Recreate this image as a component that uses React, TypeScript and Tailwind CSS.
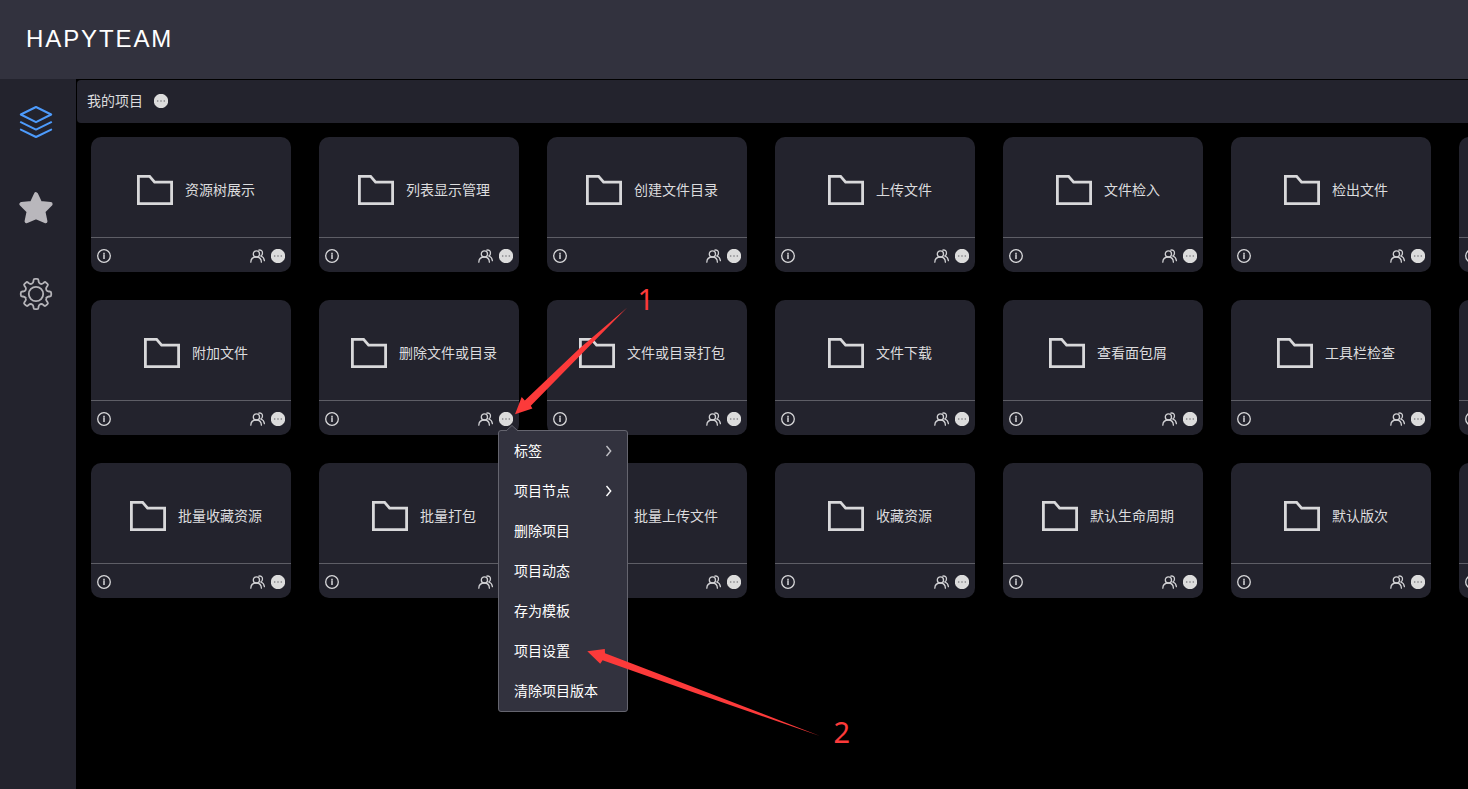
import React from "react";

const rows: string[][] = [
  ["资源树展示", "列表显示管理", "创建文件目录", "上传文件", "文件检入", "检出文件", ""],
  ["附加文件", "删除文件或目录", "文件或目录打包", "文件下载", "查看面包屑", "工具栏检查", ""],
  ["批量收藏资源", "批量打包", "批量上传文件", "收藏资源", "默认生命周期", "默认版次", ""],
];

const menuItems = [
  { label: "标签", sub: true, dim: true },
  { label: "项目节点", sub: true },
  { label: "删除项目" },
  { label: "项目动态" },
  { label: "存为模板" },
  { label: "项目设置" },
  { label: "清除项目版本" },
];

function gearPath() {
  const points: { x: number; y: number; r: number }[] = [];
  const add = (deg: number, radius: number, r: number) => {
    const a = (deg * Math.PI) / 180;
    points.push({ x: 17 + radius * Math.sin(a), y: 17 + radius * Math.cos(a), r });
  };
  for (let i = 0; i < 8; i++) {
    const c = i * 45;
    add(c - 13.5, 11.2, 2);
    add(c - 9, 15.4, 1.4);
    add(c + 9, 15.4, 1.4);
    add(c + 13.5, 11.2, 2);
  }
  const n = points.length;
  let d = "";
  points.forEach((p, i) => {
    const a = points[(i + n - 1) % n];
    const b = points[(i + 1) % n];
    const la = Math.hypot(a.x - p.x, a.y - p.y);
    const lb = Math.hypot(b.x - p.x, b.y - p.y);
    const sx = p.x + ((a.x - p.x) * p.r) / la;
    const sy = p.y + ((a.y - p.y) * p.r) / la;
    const ex = p.x + ((b.x - p.x) * p.r) / lb;
    const ey = p.y + ((b.y - p.y) * p.r) / lb;
    d += `${i ? "L" : "M"}${sx.toFixed(2)} ${sy.toFixed(2)}Q${p.x.toFixed(2)} ${p.y.toFixed(2)} ${ex.toFixed(2)} ${ey.toFixed(2)}`;
  });
  return d + "Z";
}

const LayersIcon = () => (
  <svg className="h-[34px] w-[34px]" viewBox="0 0 34 34" fill="none" stroke="#4d9bfc" strokeWidth="2" strokeLinejoin="round" strokeLinecap="round">
    <path d="M17 2 32.2 9.5 17 17.2 1.8 9.5Z" />
    <path d="M1.8 17.2 17 24.6 32.2 17.2" />
    <path d="M1.8 24.6 17 32 32.2 24.6" />
  </svg>
);

const StarIcon = () => (
  <svg className="h-[34px] w-[34px]" viewBox="0 0 34 34" fill="#b9b7bc" stroke="#b9b7bc" strokeWidth="4" strokeLinejoin="round">
    <path d="M17 3.2 21.2 12 31.6 13.1 24.4 20.3 26.4 30.2 17 26.1 7.6 30.2 9.6 20.3 2.4 13.1 12.8 12Z" />
  </svg>
);

const GearIcon = () => (
  <svg className="h-[34px] w-[34px]" viewBox="0 0 34 34" fill="none" stroke="#b4b3b8" strokeWidth="1.8">
    <path d={gearPath()} />
    <circle cx="17" cy="17" r="7.2" />
  </svg>
);

const FolderIcon = () => (
  <svg className="h-[31px] w-9 shrink-0" viewBox="0 0 36 31" fill="none" stroke="#d8d8da" strokeWidth="2.8">
    <path d="M1.4 1.4H12.6L17.6 7.1H34.6V28.6H1.4Z" />
  </svg>
);

const InfoIcon = () => (
  <svg className="h-[14px] w-[14px] shrink-0" viewBox="0 0 14 14" fill="none" stroke="#d8d8da">
    <circle cx="7" cy="7" r="6.3" strokeWidth="1.3" />
    <path d="M7 5.2V10M7 3.8V5" strokeWidth="1.5" />
  </svg>
);

const PeopleIcon = () => (
  <svg className="h-[14px] w-[15px] shrink-0" viewBox="0 0 15 14" fill="none" stroke="#d0d0d3" strokeWidth="1.3" strokeLinecap="round">
    <circle cx="6.4" cy="4.9" r="3.1" />
    <path d="M.8 13.2C.9 10 3.1 8 6.4 8S11.3 10 11.4 13.2" />
    <path d="M8.8 1.1C10.8.6 12.5 1.9 12.5 4.1 12.5 5.5 11.9 6.5 10.8 7 12.8 7.7 14.2 9.4 14.4 11.6" />
  </svg>
);

const MoreIcon = () => (
  <svg className="h-[14px] w-[14px] shrink-0" viewBox="0 0 14 14">
    <circle cx="7" cy="7" r="7.2" fill="#dcdcdc" />
    <g fill="#77777b">
      <circle cx="3.7" cy="7" r=".8" />
      <circle cx="7" cy="7" r=".8" />
      <circle cx="10.3" cy="7" r=".8" />
    </g>
  </svg>
);

function ProjectMenu() {
  return (
    <div className="absolute top-[130px] left-[179px] z-10 w-[130px] rounded-[3px] border border-[#65656f] bg-[#32323e]">
      <svg className="absolute -top-[6px] left-[7px] h-[7px] w-3" viewBox="0 0 12 7">
        <path d="M0 6 6 .5 12 6V7H0Z" fill="#32323e" />
        <path d="M0 6 6 .5 12 6" fill="none" stroke="#65656f" />
      </svg>
      {menuItems.map((item) => (
        <div key={item.label} className="flex h-10 items-center justify-between px-[15px] text-sm text-white">
          <span className="pb-[2px]">{item.label}</span>
          {item.sub && (
            <svg className="h-3 w-[7px]" viewBox="0 0 7 12" fill="none" stroke={item.dim ? "#c0c0c5" : "#ffffff"} strokeWidth="1.4">
              <path d="M1.5 1 5.7 6 1.5 11" />
            </svg>
          )}
        </div>
      ))}
    </div>
  );
}

function Card({ name, open }: { name: string; open?: boolean }) {
  return (
    <div className="relative flex h-[135px] w-[200px] shrink-0 flex-col rounded-[10px] bg-[#23232d]">
      <div className="flex h-[101px] items-center justify-center gap-3 border-b border-[#5e5e66] pt-[6px] pl-[10px]">
        <FolderIcon />
        <span className="pb-[2px] text-sm whitespace-nowrap text-[#dcdcde]">{name}</span>
      </div>
      <div className="flex h-[34px] items-center justify-between px-[6px] pt-[2px]">
        <InfoIcon />
        <div className="flex items-center gap-[6px]">
          <PeopleIcon />
          <MoreIcon />
        </div>
      </div>
      {open && <ProjectMenu />}
    </div>
  );
}

const Annotations = () => (
  <svg className="pointer-events-none absolute inset-0 z-20 h-[789px] w-[1468px]" viewBox="0 0 1468 789" fill="#fc3a3a">
    <path d="M515 414.3 521.7 397 524.8 400.6 580 348 627 307.8 583 352.5 530.8 405.8 532.4 408.4Z" />
    <path d="M587.3 651.3 604.8 649 605 653.3 697 688.5 820 736 696 693.3 602.6 660.2 600.2 663.7Z" />
    <text x="637.5" y="310" fontSize="29" fontFamily="Noto Sans, sans-serif">1</text>
    <text x="833.5" y="743" fontSize="29" fontFamily="Noto Sans, sans-serif">2</text>
  </svg>
);

export default function App() {
  return (
    <div className="relative flex h-[789px] w-[1468px] flex-col overflow-hidden bg-black font-['Noto_Sans_CJK_SC',sans-serif]">
      <header className="flex h-[79px] shrink-0 items-center bg-[#32323e] pb-[2px] pl-[26px]">
        <h1 className="font-['Liberation_Sans',sans-serif] text-2xl tracking-[1.9px] text-white">HAPYTEAM</h1>
      </header>
      <div className="flex min-h-0 flex-1">
        <nav className="flex w-[76px] shrink-0 flex-col gap-[52px] bg-[#23232d] pt-[26px] pl-[19px]">
          <LayersIcon />
          <StarIcon />
          <GearIcon />
        </nav>
        <main className="min-w-0 flex-1 pt-px pl-px">
          <div className="flex h-[43px] items-center gap-[11px] rounded-l-[4px] bg-[#23232d] pb-px pl-[10px]">
            <span className="pb-[2px] text-sm text-[#dcdcde]">我的项目</span>
            <MoreIcon />
          </div>
          <div className="flex flex-col gap-7 pt-[14px] pl-[14px]">
            {rows.map((row, r) => (
              <div key={r} className="flex gap-7">
                {row.map((name, c) => (
                  <Card key={c} name={name} open={r === 1 && c === 1} />
                ))}
              </div>
            ))}
          </div>
        </main>
      </div>
      <Annotations />
    </div>
  );
}
